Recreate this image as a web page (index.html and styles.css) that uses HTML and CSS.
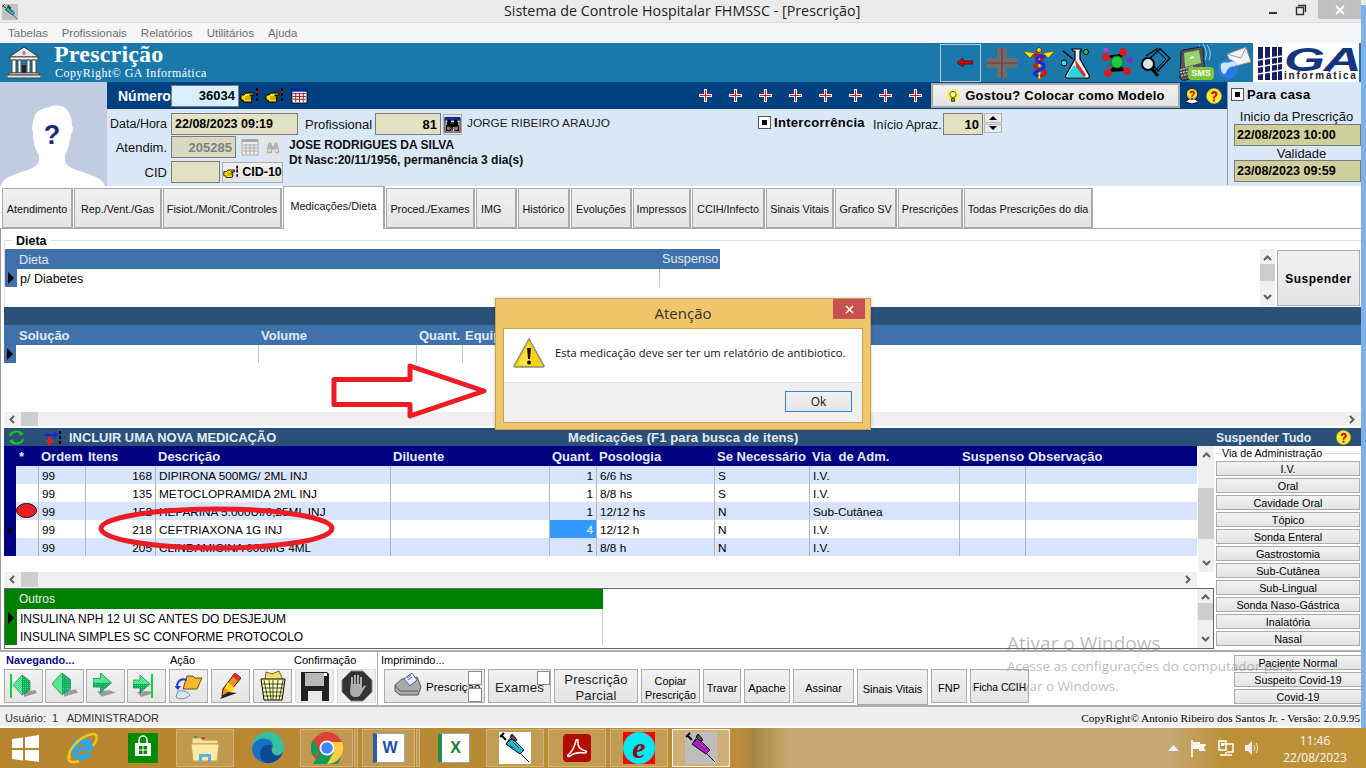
FILE: index.html
```html
<!DOCTYPE html>
<html lang="pt-BR">
<head>
<meta charset="utf-8">
<title>Sistema de Controle Hospitalar FHMSSC - [Prescrição]</title>
<link rel="stylesheet" href="styles.css">
</head>
<body>
<svg class="defs" width="0" height="0" aria-hidden="true">
  <defs>
    <pattern id="dith" width="2" height="2" patternUnits="userSpaceOnUse"><rect width="2" height="2" fill="#24dc70"/><rect width="1" height="1" fill="#8cf0b0"/><rect x="1" y="1" width="1" height="1" fill="#8cf0b0"/></pattern>
    <pattern id="dith2" width="2" height="2" patternUnits="userSpaceOnUse"><rect width="2" height="2" fill="#0fa858"/><rect width="1" height="1" fill="#3cdc90"/></pattern>
  </defs>
  <symbol id="plus" viewBox="0 0 13 13"><path d="M5 0h3v5h5v3H8v5H5V8H0V5h5z" fill="#fff"/><path d="M6 1h1v5h5v1H7v5H6V7H1V6h5z" fill="#d61a1a"/></symbol>
  <symbol id="hand" viewBox="0 0 18 18"><path d="M1 8h3l2-2h8v2h-4v1h2v2h-1v1h1v1l-1 2H4l-1-2H1z" fill="#ffe100" stroke="#000" stroke-width="1"/><path d="M5 10h6M5 12h6" stroke="#a08000"/><path d="M16 1h2v3h-2zM16 6h2v3h-2zM16 11h2v3h-2z" fill="#000"/><path d="M16 4h2v2h-2z" fill="#e00"/></symbol>
  <symbol id="cal" viewBox="0 0 18 18"><rect x="1" y="2" width="16" height="15" fill="#fff" stroke="#000"/><rect x="1" y="1" width="16" height="4" fill="#0a2aa0"/><path d="M2 7h14M2 10h14M2 13h14M5 6v10M9 6v10M13 6v10" stroke="#902020"/></symbol>
  <symbol id="calg" viewBox="0 0 18 18"><rect x="1" y="2" width="16" height="15" fill="#eee" stroke="#aaa"/><rect x="1" y="1" width="16" height="3" fill="#aaa"/><path d="M2 7h14M2 10h14M2 13h14M5 6v10M9 6v10M13 6v10" stroke="#aaa"/></symbol>
  <symbol id="binoc" viewBox="0 0 18 18"><path d="M4 4h3l1 4h2l1-4h3l2 8v4h-5v-4H8v4H2v-4z" fill="currentColor"/><circle cx="5" cy="13" r="2" fill="#fff" opacity=".5"/><circle cx="13" cy="13" r="2" fill="#fff" opacity=".5"/></symbol>
  <symbol id="bulb" viewBox="0 0 18 20"><path d="M9 0l2 3 3-2 0 4 4 1-2 3 2 3-4 1 0 3-3-1-2 3-2-3-3 1 0-3-4-1 2-3-2-3 4-1 0-4 3 2z" fill="#ffff30"/><circle cx="9" cy="8" r="4" fill="#fff6a0" stroke="#333"/><path d="M7 13h4v4H7z" fill="#888" stroke="#222"/></symbol>
  <symbol id="quest" viewBox="0 0 16 16"><circle cx="8" cy="8" r="7.500" fill="#ffe830"/><circle cx="8" cy="8" r="7.500" fill="none" stroke="#e0c000" stroke-dasharray="1 1"/><path d="M5 6c0-4 6.500-4 6.500 0 0 2.500-2.500 2.500-2.500 4.500H7c0-3 2.500-3 2.300-4.500 0-1.200-2-1.200-2.100.3z" fill="#d01010"/><rect x="7" y="11.500" width="2" height="2" fill="#d01010"/></symbol>
  <symbol id="qbook" viewBox="0 0 16 16"><path d="M1 14L8 9l7 5-7 2z" fill="#fff" stroke="#000"/><circle cx="8" cy="6" r="5.500" fill="#ffe830" stroke="#000" stroke-width=".6"/><path d="M5.500 5c0-3.500 5.500-3.500 5.500 0 0 2-2 2-2.200 4H7.200c0-2.500 2.200-2.500 2-4 0-1-1.800-1-1.900.2z" fill="#d01010"/><rect x="7" y="10" width="2" height="1.500" fill="#d01010"/></symbol>
  <symbol id="chev-up" viewBox="0 0 9 6"><path d="M1 5l3.500-3.500L8 5" fill="none" stroke="#606060" stroke-width="2"/></symbol>
  <symbol id="chev-down" viewBox="0 0 9 6"><path d="M1 1l3.500 3.500L8 1" fill="none" stroke="#606060" stroke-width="2"/></symbol>
  <symbol id="chev-left" viewBox="0 0 6 9"><path d="M5 1L1.500 4.500 5 8" fill="none" stroke="#606060" stroke-width="2"/></symbol>
  <symbol id="chev-right" viewBox="0 0 6 9"><path d="M1 1l3.500 3.500L1 8" fill="none" stroke="#606060" stroke-width="2"/></symbol>
  <symbol id="ind" viewBox="0 0 9 14"><path d="M1 0l7 7-7 7z" fill="#000"/></symbol>
  <symbol id="gem" viewBox="0 0 24 24"><path d="M11 17l11-2 2 3-13 4z" fill="#9a9a9a"/><path d="M0 10L9 0v20z" fill="url(#dith)"/><path d="M9 0l8 6v9l-8 5z" fill="url(#dith2)"/><path d="M0 10L9 0l8 6v9l-8 5z" fill="none" stroke="#0a7a40" stroke-width=".6"/></symbol>
  <symbol id="gemr" viewBox="0 0 24 24"><path d="M4 17l11-1 6 2-13 4z" fill="#9a9a9a"/><path d="M0 5h7V0l10 9-10 9v-5H0z" fill="url(#dith2)"/><path d="M7 0l10 9H0V5h7z" fill="url(#dith)"/><path d="M0 5h7V0l10 9-10 9v-5H0z" fill="none" stroke="#0a7a40" stroke-width=".6"/></symbol>
  <symbol id="syr" viewBox="0 0 32 32"><path d="M2 3l5 5M5 1L1 5" stroke="#000" stroke-width="2"/><path d="M7 12l5-5 3 1 10 10-4 4L11 15z" fill="var(--barrel,#27b5c9)" stroke="#000"/><path d="M12 5l-5 7M13 2l5 6-3 1-4-4z" fill="#555" stroke="#000"/><path d="M21 21l9 9" stroke="#000"/><path d="M11 13l3 3M14 10l3 3M17 13l3 3" stroke="var(--mark,#0a5060)"/></symbol>
</svg>

<div class="screen">
  <header class="titlebar">
    <span class="app-ico"><svg width="16" height="16"><use href="#syr"/></svg></span>
    <span class="title-text">Sistema de Controle Hospitalar FHMSSC - [Prescrição]</span>
    <div class="winbtns">
      <span class="wb"><svg width="10" height="10" viewBox="0 0 10 10"><rect x="1" y="7" width="8" height="2" fill="#333"/></svg></span>
      <span class="wb"><svg width="12" height="12" viewBox="0 0 12 12"><path d="M3 1.500h7.500V8M1.500 3.500h7v7h-7z" fill="none" stroke="#333" stroke-width="1.400"/></svg></span>
      <span class="wb close"><svg width="10" height="10" viewBox="0 0 10 10"><path d="M1 1l8 8M9 1L1 9" stroke="#fff" stroke-width="1.800"/></svg></span>
    </div>
  </header>

  <div class="client">
    <nav class="menubar">
      <span>Tabelas</span><span>Profissionais</span><span>Relatórios</span><span>Utilitários</span><span>Ajuda</span>
    </nav>

    <div class="brandbar">
      <svg class="building" width="34" height="33" viewBox="0 0 34 33"><path d="M17 1L2 11h30z" fill="#e8e8e8" stroke="#333"/><circle cx="17" cy="7" r="2" fill="#999"/><rect x="3" y="11" width="28" height="3" fill="#fff" stroke="#444"/><path d="M5 14h4v13H5zM11 14h3v13h-3zM20 14h3v13h-3zM25 14h4v13h-4z" fill="#fff" stroke="#444"/><path d="M15 19h4v8h-4z" fill="#222"/><rect x="2" y="27" width="30" height="2" fill="#fff" stroke="#444"/><rect x="0" y="29" width="34" height="3" fill="#e0e0e0" stroke="#444"/></svg>
      <div class="brandtext">
        <div class="brand-title">Prescrição</div>
        <div class="brand-copy">CopyRight© GA Informática</div>
      </div>
      <div class="sel-btn"><svg width="16" height="9" viewBox="0 0 16 9"><path d="M0 4.500L6 0v3h10v3H6v3z" fill="#e00000" stroke="#300" stroke-width=".7"/></svg></div>
      <svg class="tool-ico ti-cross" width="30" height="32" viewBox="0 0 30 32"><path d="M10 1h10v10h10v10H20v10H10V21H0V11h10z" fill="#6d6d6d"/><path d="M15 1v30M0 16h30" stroke="#8a2828"/></svg>
      <svg class="tool-ico" width="32" height="34" viewBox="0 0 32 34"><path d="M0 5l12 2-5 5zM32 5L20 7l5 5z" fill="#ffe000" stroke="#555" stroke-width=".8"/><rect x="15" y="1" width="3" height="32" fill="#ffe000" stroke="#665"/><circle cx="16" cy="4" r="2.500" fill="#ffe000" stroke="#333"/><path d="M10 10c8-3 13 1 7 5s-8 6 0 8 6 6 0 7" fill="none" stroke="#d81010" stroke-width="3"/><path d="M22 11c-7-2-12 3-6 5s8 5 1 8-7 4-2 6" fill="none" stroke="#1428d8" stroke-width="3"/></svg>
      <svg class="tool-ico" width="32" height="34" viewBox="0 0 32 34"><path d="M11 3h9v2h-1v8l9 16c1 2 0 3-2 3H7c-2 0-3-1-2-3l9-16V5h-2z" fill="#f2f2f2" stroke="#000" stroke-width="1.200"/><path d="M7 28l6-9 11 12H8c-1 0-2-1-1-3z" fill="#20d8e0"/><path d="M14 13l11 16-2 2-8-10z" fill="#d43030"/><circle cx="3" cy="17" r="3" fill="#30e0d0" stroke="#000"/><circle cx="25" cy="6" r="2.500" fill="#20d070" stroke="#000"/><path d="M2 5l10 8" stroke="#000" stroke-width="1.500"/></svg>
      <svg class="tool-ico ti-mol" width="32" height="32" viewBox="0 0 32 32"><path d="M5 9l11 6 10-9M6 25l10-10 10 9M16 15L5 20" stroke="#555" stroke-width="1.500"/><circle cx="16" cy="15" r="6" fill="#24c83c" stroke="#117a20"/><circle cx="5" cy="10" r="3.800" fill="#e01818"/><circle cx="22" cy="5" r="3.800" fill="#e01818"/><circle cx="7" cy="26" r="3.800" fill="#e01818"/><circle cx="26" cy="24" r="3.800" fill="#e01818"/><circle cx="5" cy="3" r="2.500" fill="#c040c0"/><circle cx="29" cy="13" r="2.800" fill="#9020c0"/></svg>
      <svg class="tool-ico" width="32" height="32" viewBox="0 0 32 32"><path d="M9 13L21 2l10 9-12 13zM7 9l12-8" fill="none" stroke="#000" stroke-width="1.300"/><path d="M17 3l10 9-11 12" fill="none" stroke="#000"/><circle cx="9" cy="17" r="6" fill="#d7e7ea" stroke="#000" stroke-width="2"/><path d="M13 22l6 7" stroke="#000" stroke-width="3"/></svg>
      <div class="phone-ico">
        <svg width="38" height="37" viewBox="0 0 38 37"><path d="M23 1c3 5 3 9 1 13M27 0c4 6 4 11 2 16M31 1c4 6 4 10 2 15" stroke="#a8d8e8" fill="none"/><path d="M5 9c0-2 1-3 3-3l16-3c2 0 3 1 3 3l2 24-19 6c-3 1-6 0-6-3z" fill="#555" stroke="#1c1c1c"/><path d="M8 9l15-3 2 13-16 4z" fill="#94d070"/><path d="M13 15l3-3 3 2z" fill="#fff"/><path d="M4 26l13-4M4 29l12-3M5 32l10-3" stroke="#ddd" stroke-dasharray="2 1"/></svg>
        <span class="sms">SMS</span>
      </div>
      <svg class="tool-ico ti-globe" width="33" height="34" viewBox="0 0 33 34"><path d="M9 8L28 1l5 15-19 5z" fill="#f4f4f4" stroke="#888"/><path d="M9 8l14 4 5-11" fill="none" stroke="#999"/><circle cx="10" cy="23" r="10" fill="#2a78e4"/><path d="M3 18c4-3 6 0 9-2s6 0 7 3c-3 3-5 0-8 3s-3 6-5 6-4-6-3-10z" fill="#c8e6ff"/></svg>
      <div class="ga-logo">
        <svg width="25" height="33" viewBox="0 0 25 33"><path d="M0 0h5v33H0zM7 0h5v33H7zM14 0h5v33h-5zM20 0h4v33h-4z" fill="#15205e"/><path d="M0 13l25-4M0 20l25-4M0 27l25-4" stroke="#fff" stroke-width="1.500"/></svg>
        <div class="ga-text"><span class="ga-big">GA</span><span class="ga-small">informática</span></div>
      </div>
    </div>

    <div class="info">
      <div class="photo">
        <svg width="107" height="104" viewBox="0 0 107 104"><path d="M1 104C3 94 18 92 30 87 38 84 40 80 39 73 35 68 33 60 33 50 31 46 33 40 34 36 35 28 45 26 50 25 53 23 62 23 65 26 70 30 72 36 72 44 74 46 73 50 71 52 70 60 68 68 65 73 64 80 66 84 74 87 86 92 102 94 105 104Z" fill="#fff"/><text x="52" y="62" text-anchor="middle" class="photo-q">?</text></svg>
      </div>
      <div class="info-main">
        <div class="band">
          <span class="num-label">Número</span>
          <span class="fld fld-num">36034</span>
          <svg class="ico-hand1" width="18" height="18"><use href="#hand"/></svg>
          <svg class="ico-hand2" width="18" height="18"><use href="#hand"/></svg>
          <svg class="ico-cal" width="17" height="17"><use href="#cal"/></svg>
          <div class="pluses">
            <svg width="13" height="13"><use href="#plus"/></svg><svg width="13" height="13"><use href="#plus"/></svg><svg width="13" height="13"><use href="#plus"/></svg><svg width="13" height="13"><use href="#plus"/></svg><svg width="13" height="13"><use href="#plus"/></svg><svg width="13" height="13"><use href="#plus"/></svg><svg width="13" height="13"><use href="#plus"/></svg><svg width="13" height="13"><use href="#plus"/></svg>
          </div>
          <div class="btn modelo"><svg width="14" height="16"><use href="#bulb"/></svg><span>Gostou? Colocar como Modelo</span></div>
          <svg class="help1" width="16" height="16"><use href="#qbook"/></svg>
          <svg class="help2" width="16" height="16"><use href="#quest"/></svg>
        </div>
        <div class="form">
          <div class="row-top">
            <span class="lbl lbl-dh">Data/Hora</span>
            <span class="fld fld-date">22/08/2023 09:19</span>
            <span class="lbl lbl-prof">Profissional</span>
            <span class="fld fld-prof">81</span>
            <span class="btn-ico"><svg width="17" height="17" class="dark-ico"><use href="#cal"/><use href="#binoc"/></svg></span>
            <span class="prof-name">JORGE RIBEIRO ARAUJO</span>
            <span class="chk chk-up"></span>
            <span class="chk-lbl chk-lbl-i">Intercorrência</span>
            <span class="lbl lbl-apraz">Início Apraz.</span>
            <span class="fld fld-apraz">10</span>
            <span class="spinner">
              <span class="spin"><i class="tri-up"></i></span>
              <span class="spin"><i class="tri-down"></i></span>
            </span>
          </div>
          <div class="row-bottom">
            <div class="col-cid">
              <div class="row-a">
                <span class="lbl">Atendim.</span>
                <span class="fld fld-at">205285</span>
                <span class="ic-g"><svg width="18" height="18"><use href="#calg"/></svg></span>
                <span class="ic-g ic-g2"><svg width="16" height="16" class="gray-ico"><use href="#binoc"/></svg></span>
              </div>
              <div class="row-c">
                <span class="lbl">CID</span>
                <span class="fld fld-cid"></span>
                <span class="btn cid-btn"><svg width="15" height="15"><use href="#hand"/></svg>CID-10</span>
              </div>
            </div>
            <div class="patient">
              <div>JOSE RODRIGUES DA SILVA</div>
              <div>Dt Nasc:20/11/1956, permanência 3 dia(s)</div>
            </div>
          </div>
        </div>
      </div>
      <aside class="side">
        <div class="side-chk"><span class="chk"></span><span class="chk-lbl">Para casa</span></div>
        <div class="side-lbl">Inicio da Prescrição</div>
        <span class="fld fld-side">22/08/2023 10:00</span>
        <div class="side-lbl side-val">Validade</div>
        <span class="fld fld-side">23/08/2023 09:59</span>
      </aside>
    </div>

    <div class="tabs">
      <span class="tab">Atendimento</span>
      <span class="tab">Rep./Vent./Gas</span>
      <span class="tab">Fisiot./Monit./Controles</span>
      <span class="tab active">Medicações/Dieta</span>
      <span class="tab">Proced./Exames</span>
      <span class="tab tab-left">IMG</span>
      <span class="tab">Histórico</span>
      <span class="tab">Evoluções</span>
      <span class="tab">Impressos</span>
      <span class="tab">CCIH/Infecto</span>
      <span class="tab">Sinais Vitais</span>
      <span class="tab">Grafico SV</span>
      <span class="tab">Prescrições</span>
      <span class="tab">Todas Prescrições do dia</span>
    </div>

    <main class="main">
      <section class="dieta">
        <div class="group">
          <span class="legend">Dieta</span>
          <div class="dieta-grid">
            <div class="dg-head"><span class="dg-ind"></span><span class="dg-c1">Dieta</span><span class="dg-c2">Suspenso</span></div>
            <div class="dg-row"><span class="dg-ind"><svg width="8" height="12"><use href="#ind"/></svg></span><span class="dg-c1">p/ Diabetes</span><span class="dg-c2"></span></div>
          </div>
          <div class="vscroll vs-dieta">
            <svg width="9" height="6"><use href="#chev-up"/></svg>
            <span class="thumb th-dieta"></span>
            <svg class="end" width="9" height="6"><use href="#chev-down"/></svg>
          </div>
          <div class="btn suspender">Suspender</div>
        </div>
      </section>

      <div class="bar bar-sol"></div>
      <div class="sol-head"><span>Solução</span><span>Volume</span><span>Quant.</span><span>Equip</span><span class="sol-end">mo</span></div>
      <div class="sol-row"><span class="sol-ind"><svg width="8" height="12"><use href="#ind"/></svg></span><span></span><span></span><span></span><span></span></div>
      <div class="sol-space"></div>
      <div class="hscroll"><svg width="6" height="9"><use href="#chev-left"/></svg><span class="thumb th-h"></span><svg class="end" width="6" height="9"><use href="#chev-right"/></svg></div>

      <div class="bar bar-med">
        <svg class="ref-ico" width="17" height="15" viewBox="0 0 17 15"><path d="M2 6c1-5 9-6 12-2M15 9c-1 5-9 6-12 2" fill="none" stroke="#19c41e" stroke-width="2.200"/><path d="M11 1l5 3-4 2zM6 14l-5-3 4-2z" fill="#19c41e"/></svg>
        <svg class="add-ico" width="17" height="15" viewBox="0 0 17 15"><path d="M1 4h9V1l4 4-4 3V6H1z" fill="#1420e8"/><path d="M4 7h3v3h3v2H7v3H4v-3H1v-2h3z" fill="#e02020"/><path d="M15 1h2v3h-2zM15 6h2v3h-2zM15 11h2v3h-2z" fill="#000"/></svg>
        <span class="bar-l">INCLUIR UMA NOVA MEDICAÇÃO</span>
        <span class="bar-c">Medicações (F1 para busca de itens)</span>
        <span class="bar-r">Suspender Tudo</span>
        <svg class="bar-q" width="15" height="15"><use href="#quest"/></svg>
      </div>

      <div class="lower">
        <div class="lower-left">
          <div class="med-wrap">
            <div class="med-grid">
              <div class="mrow mhead"><span></span><span class="star">*</span><span>Ordem</span><span>Itens</span><span>Descrição</span><span>Diluente</span><span>Quant.</span><span>Posologia</span><span>Se Necessário</span><span>Via  de Adm.</span><span>Suspenso</span><span>Observação</span></div>
              <div class="mrow odd"><span class="mi"></span><span class="mk"></span><span>99</span><span class="r">168</span><span>DIPIRONA 500MG/ 2ML INJ</span><span></span><span class="r">1</span><span>6/6 hs</span><span>S</span><span>I.V.</span><span></span><span></span></div>
              <div class="mrow"><span class="mi"></span><span class="mk"></span><span>99</span><span class="r">135</span><span>METOCLOPRAMIDA 2ML INJ</span><span></span><span class="r">1</span><span>8/8 hs</span><span>S</span><span>I.V.</span><span></span><span></span></div>
              <div class="mrow odd"><span class="mi"></span><span class="mk"></span><span>99</span><span class="r">152</span><span>HEPARINA 5.000UI/0,25ML INJ</span><span></span><span class="r">1</span><span>12/12 hs</span><span>N</span><span>Sub-Cutânea</span><span></span><span></span></div>
              <div class="mrow"><span class="mi"><svg width="6" height="12"><use href="#ind"/></svg></span><span class="mk"></span><span>99</span><span class="r">218</span><span>CEFTRIAXONA 1G INJ</span><span></span><span class="r selcell">4</span><span>12/12 h</span><span>N</span><span>I.V.</span><span></span><span></span></div>
              <div class="mrow odd"><span class="mi"></span><span class="mk"></span><span>99</span><span class="r">205</span><span>CLINDAMICINA 600MG 4ML</span><span></span><span class="r">1</span><span>8/8 h</span><span>N</span><span>I.V.</span><span></span><span></span></div>
            </div>
            <div class="vscroll vs-med">
              <svg width="9" height="6"><use href="#chev-up"/></svg>
              <span class="thumb th-med"></span>
              <svg class="end" width="9" height="6"><use href="#chev-down"/></svg>
            </div>
          </div>
          <div class="hscroll hs-med"><svg width="6" height="9"><use href="#chev-left"/></svg><span class="thumb th-h"></span><svg class="end" width="6" height="9"><use href="#chev-right"/></svg></div>
          <div class="outros">
            <div class="ou-grid">
              <div class="ou-head">Outros</div>
              <div class="ou-row"><span class="ou-ind"><svg width="8" height="12"><use href="#ind"/></svg></span><span>INSULINA NPH 12 UI SC ANTES DO DESJEJUM</span></div>
              <div class="ou-row"><span class="ou-ind"></span><span>INSULINA SIMPLES SC CONFORME PROTOCOLO</span></div>
            </div>
            <div class="vscroll vs-ou">
              <svg width="9" height="6"><use href="#chev-up"/></svg>
              <span class="thumb th-ou"></span>
              <svg class="end" width="9" height="6"><use href="#chev-down"/></svg>
            </div>
          </div>
        </div>
        <div class="via">
          <span class="via-legend">Via de Administração</span>
          <div class="via-list">
            <span class="btn via-btn">I.V.</span><span class="btn via-btn">Oral</span><span class="btn via-btn">Cavidade Oral</span><span class="btn via-btn">Tópico</span><span class="btn via-btn">Sonda Enteral</span><span class="btn via-btn">Gastrostomia</span><span class="btn via-btn">Sub-Cutânea</span><span class="btn via-btn">Sub-Lingual</span><span class="btn via-btn">Sonda Naso-Gástrica</span><span class="btn via-btn">Inalatória</span><span class="btn via-btn">Nasal</span>
          </div>
        </div>
      </div>
    </main>

    <footer class="toolbar">
      <div class="tb-group tb-nav">
        <span class="tb-label tb-blue">Navegando...</span>
        <div class="tb-btns">
          <span class="btn tb-ic"><svg width="28" height="26" viewBox="0 0 28 26"><rect x="0" y="1" width="2" height="24" fill="#10d040"/><use href="#gem" x="3" y="2" width="24" height="24"/></svg></span>
          <span class="btn tb-ic"><svg width="26" height="26"><use href="#gem"/></svg></span>
          <span class="btn tb-ic"><svg width="26" height="26"><use href="#gemr"/></svg></span>
          <span class="btn tb-ic"><svg width="28" height="26" viewBox="0 0 28 26"><use href="#gemr" x="0" y="2" width="24" height="24"/><rect x="18" y="1" width="2" height="24" fill="#10d040"/></svg></span>
        </div>
      </div>
      <div class="tb-group tb-acao">
        <span class="tb-label">Ação</span>
        <div class="tb-btns">
          <span class="btn tb-ic"><svg width="28" height="30" viewBox="0 0 28 30"><path d="M12 5h6l2 2h7l-5 11H8z" fill="#f4b830" stroke="#7a4c00"/><path d="M12 10c-5-2-8 0-9 5l3 0-3 4-4-4 2 0c1-7 6-9 11-7z" fill="#2040e0"/><path d="M3 20c5-1 10 1 12 4-3 4-11 5-14 2z" fill="#cfeaff" stroke="#888"/></svg></span>
          <span class="btn tb-ic"><svg width="24" height="30" viewBox="0 0 24 30"><path d="M16 2l6 5-13 16-6 2 1-7z" fill="#f29020" stroke="#301000"/><path d="M16 2l6 5-3 3-6-5z" fill="#d03040"/><path d="M9 11l7 6-4 5-6-5z" fill="#ffd820"/><path d="M3 25l-2 3 3-1 14-5-9-1z" fill="#222"/></svg></span>
          <span class="btn tb-ic"><svg width="28" height="32" viewBox="0 0 28 32"><path d="M7 2l6 2 7-3 4 9H6z" fill="#f6e060" stroke="#665"/><path d="M2 9h24l-3 21H5z" fill="#ffffb0" stroke="#000"/><path d="M5 10l4 20M10 10l2 20M14 10v20M19 10l-2 20M24 10l-4 20M3 14h22M4 18h20M4 22h19M5 26h18" stroke="#222" stroke-width=".8"/></svg></span>
        </div>
      </div>
      <div class="tb-group tb-conf">
        <span class="tb-label">Confirmação</span>
        <div class="tb-btns">
          <span class="btn tb-ic tb-off"><svg width="28" height="30" viewBox="0 0 28 30"><path d="M0 1h26l2 2v27H0z" fill="#222"/><rect x="4" y="2" width="19" height="13" fill="#b8b8b8"/><rect x="23" y="2" width="3" height="3" fill="#fff"/><rect x="7" y="20" width="14" height="10" fill="#e8e8e8"/></svg></span>
          <span class="btn tb-ic tb-off"><svg width="32" height="32" viewBox="0 0 32 32"><path d="M10 1h12l9 9v12l-9 9H10l-9-9V10z" fill="#333" stroke="#888"/><path d="M10 12V7h2v7h1V5h2v9h1V5h2v9h1V7h2v11l3-3 1 1-5 8c-1 2-2 3-5 3-4 0-6-2-6-6z" fill="#b0aca8"/></svg></span>
        </div>
      </div>
      <div class="tb-print">
        <span class="tb-label">Imprimindo...</span>
        <div class="tb-btns print-btns">
          <span class="btn pb-presc">
            <svg width="28" height="26" viewBox="0 0 28 26"><path d="M1 12l7-6 15-2 4 10-3 8H6l-5-4z" fill="#aaa" stroke="#555"/><path d="M10 6l8-6 5 7-7 6z" fill="#e8e8ff" stroke="#567"/><path d="M13 5l4-3M14 7l4-3" stroke="#4060d0"/><path d="M1 12l5 6h18" fill="none" stroke="#555"/></svg>
            <span class="pb-t">Prescrição</span>
            <i class="cb cb1"></i><i class="cb cb2"></i>
          </span>
          <span class="btn pb pb-ex pb-lg">Exames<i class="cb cb3"></i></span>
          <span class="btn pb pb-par pb-lg">Prescrição<br>Parcial</span>
          <span class="btn pb pb-cop">Copiar<br>Prescrição</span>
          <span class="btn pb pb-tra">Travar</span>
          <span class="btn pb pb-apa">Apache</span>
          <span class="btn pb pb-ass">Assinar</span>
          <span class="btn pb pb-sin">Sinais Vitais</span>
          <span class="btn pb pb-fnp">FNP</span>
          <span class="btn pb pb-fic">Ficha CCIH</span>
        </div>
      </div>
      <div class="pat-btns">
        <span class="btn pat">Paciente Normal</span>
        <span class="btn pat">Suspeito Covid-19</span>
        <span class="btn pat">Covid-19</span>
      </div>
    </footer>

    <div class="statusbar">
      <span>Usuário:&nbsp; 1 &nbsp; ADMINISTRADOR</span>
      <span class="st-copy">CopyRight© Antonio Ribeiro dos Santos Jr. - Versão: 2.0.9.95</span>
    </div>
  </div>

  <div class="taskbar">
    <div class="start"><svg width="27" height="27" viewBox="0 0 27 27"><path d="M0 4l11-1.500V13H0zM13 2.200L27 0v13H13zM0 15h11v10.500L0 24zM13 15h14v12l-14-2z" fill="#fff"/></svg></div>
    <div class="slots">
      <div class="slot"><svg width="32" height="32" viewBox="0 0 32 32"><path d="M16 6a11 11 0 1 0 10 15h-7c-2 3-8 2-9-2h17c1-9-4-13-11-13zm-6 9c1-4 8-4 10 0z" fill="#29a9ea"/><path d="M4 27C0 20 12 5 26 2c6-1 6 6 1 12M3 23c-2 6 2 9 10 6" fill="none" stroke="#f5c518" stroke-width="2.500"/></svg></div>
      <div class="slot"><svg width="30" height="30" viewBox="0 0 30 30"><rect width="30" height="30" fill="#008a00"/><path d="M7 10h16v13H7z" fill="#fff"/><path d="M11 10V7a4 4 0 0 1 8 0v3" fill="none" stroke="#fff" stroke-width="1.500"/><path d="M11 13h3.500v3.500H11zM15.500 13H19v3.500h-3.500zM11 17.500h3.500V21H11zM15.500 17.500H19V21h-3.500z" fill="#008a00"/></svg></div>
      <div class="slot"><div class="frame"><svg width="30" height="30" viewBox="0 0 30 30"><path d="M2 5h8l2 2h16v4H2z" fill="#f4e39a" stroke="#b89a4a"/><rect x="4" y="3" width="3" height="2" fill="#40a040"/><rect x="12" y="4" width="3" height="2" fill="#d04040"/><path d="M1 11h28l-2 17H3z" fill="#fbe9a8" stroke="#c4a050"/><path d="M9 21h12v8h-3v-5h-6v5H9z" fill="#5ab2e8"/></svg></div></div>
      <div class="slot"><svg width="32" height="32" viewBox="0 0 32 32"><path d="M16 0a16 16 0 0 1 16 17c0 5-5 7-9 6-4-1-5-5-2-7-3-4-9-4-12 0-4-2-7-5-9-4A16 16 0 0 1 16 0z" fill="#35c1a0"/><path d="M0 16C1 9 9 5 15 7c4 1 6 4 6 7-5-3-12 0-13 6-1 5 2 9 6 11C6 30 0 24 0 16z" fill="#1a70c8"/><path d="M8 20c1-6 8-9 13-6-2 2-2 7 2 9 3 1 6 0 8-3-2 7-9 12-17 11-4-2-7-6-6-11z" fill="#0c4a94"/></svg></div>
      <div class="slot"><div class="frame frame-s"><svg width="32" height="32" viewBox="0 0 32 32"><circle cx="16" cy="16" r="16" fill="#db4437"/><path d="M16 16L2.100 24A16 16 0 0 1 2.100 8L9 20z" fill="#0f9d58"/><path d="M16 16l-7 4-6.900 12A16 16 0 0 0 30 24l-7-4z" fill="#0f9d58"/><path d="M16 32A16 16 0 0 0 31 10H16l7 10z" fill="#ffcd40"/><circle cx="16" cy="16" r="7.500" fill="#fff"/><circle cx="16" cy="16" r="5.800" fill="#4285f4"/></svg></div><i class="stub"></i></div>
      <div class="slot"><div class="frame frame-s"><div class="doc-ico word"><span>W</span></div></div><i class="stub"></i></div>
      <div class="slot"><div class="doc-ico excel"><span>X</span></div></div>
      <div class="slot"><div class="frame"><span class="syr-box"><svg width="32" height="32"><use href="#syr"/></svg></span></div></div>
      <div class="slot"><div class="frame"><svg width="28" height="28" viewBox="0 0 28 28"><rect width="28" height="28" rx="4" fill="#b30b00"/><path d="M5 21c3-2 6-7 8-14 0-2 2-2 2 0-1 6 3 9 8 10 1 1 0 2-1 2-6-1-11 0-15 3-2 1-3 0-2-1z" fill="none" stroke="#fff" stroke-width="1.500"/></svg></div></div>
      <div class="slot"><div class="frame"><span class="e-box"><span class="e-circle"><span>e</span></span></span></div></div>
      <div class="slot"><div class="frame frame-act"><span class="syr-box syr-gray"><svg width="32" height="32"><use href="#syr"/></svg></span></div></div>
    </div>
    <div class="tray">
      <svg width="13" height="6" viewBox="0 0 13 6"><path d="M6.500 0L12 6H1z" fill="#f2f2f2"/></svg>
      <svg class="tr-ico" width="16" height="17" viewBox="0 0 16 17"><path d="M1 0v17" stroke="#fff" stroke-width="1.600"/><path d="M2 2h7v2h6l-2 4 2 3H8V9H2z" fill="#fff" opacity=".9"/></svg>
      <svg class="tr-ico" width="16" height="17" viewBox="0 0 16 17"><path d="M1 1h7v9H1z" fill="none" stroke="#fff" stroke-width="1.500"/><path d="M3 3h3v3H3z" fill="#fff"/><path d="M6 4h9v8H9" fill="none" stroke="#fff" stroke-width="1.500"/><path d="M2 15h12M8 12v3" stroke="#fff" stroke-width="1.500"/></svg>
      <svg class="tr-ico" width="14" height="14" viewBox="0 0 14 14"><path d="M0 4h3l4-4v14l-4-4H0z" fill="#eee"/><path d="M9 4c1 2 1 4 0 6M11 2c2 3 2 7 0 10" fill="none" stroke="#eee"/></svg>
      <div class="clock"><div>11:46</div><div>22/08/2023</div></div>
    </div>
  </div>

  <svg class="annot" width="1366" height="768" viewBox="0 0 1366 768">
    <path d="M334 379.500H410V366L484 391 410 416V404.500H334z" fill="none" stroke="#ed1c24" stroke-width="5" stroke-linejoin="round"/>
    <ellipse cx="216.500" cy="528.500" rx="115.500" ry="19.500" fill="none" stroke="#ed1c24" stroke-width="5"/>
    <ellipse cx="26.500" cy="510.500" rx="10" ry="7" fill="#ed1c24" stroke="#111"/>
  </svg>

  <div class="dialog">
    <div class="dlg-title">Atenção</div>
    <span class="dlg-close"><svg width="9" height="9" viewBox="0 0 9 9"><path d="M1 1l7 7M8 1L1 8" stroke="#fff" stroke-width="1.600"/></svg></span>
    <div class="dlg-body">
      <div class="dlg-msg">
        <svg width="32" height="30" viewBox="0 0 32 30"><path d="M16 1L1 28c0 1 0 1 1 1h28c1 0 1 0 1-1z" fill="#ffd400" stroke="#8a8a8a" stroke-width="1.500"/><path d="M5 27L16 6v21z" fill="#ffe96a" opacity=".7"/><path d="M14 10h4l-1 11h-2z" fill="#111"/><circle cx="16" cy="24.500" r="2" fill="#111"/></svg>
        <span>Esta medicação deve ser ter um relatório de antibiotico.</span>
      </div>
      <div class="dlg-foot"><span class="dlg-ok">Ok</span></div>
    </div>
  </div>

  <div class="watermark">
    <div class="wm1">Ativar o Windows</div>
    <div class="wm2">Acesse as configurações do computador para<br>ativar o Windows.</div>
  </div>
</div>
</body>
</html>
```

FILE: styles.css
```css
* { box-sizing: border-box; }
html, body { margin: 0; padding: 0; }
body { font-family: "Liberation Sans", Arial, sans-serif; font-size: 11px; color: #000; background: #fff; }
.defs { position: absolute; }
svg { display: block; flex: none; }
.screen { position: relative; width: 1366px; height: 768px; overflow: hidden; display: flex; flex-direction: column; }

/* title bar */
.titlebar { height: 23px; flex: none; display: flex; align-items: center; background: #ebebeb; border-bottom: 1px solid #d9d9d9; position: relative; }
.titlebar::after { content: ""; position: absolute; right: 0; top: 5px; width: 5px; height: 18px; background: #7fb0e8; }
.app-ico { width: 16px; height: 16px; margin: 1px 0 0 2px; background: #c0c0c0; display: block; }
.title-text { position: absolute; left: 504px; top: 1px; font-family: "Open Sans", sans-serif; font-size: 14.300px; color: #222; white-space: nowrap; }
.winbtns { position: absolute; right: 5px; top: 0; display: flex; align-items: flex-start; }
.wb { width: 28px; height: 19px; display: flex; align-items: center; justify-content: center; }
.wb.close { width: 43px; background: #c0c0c0; margin-left: 3px; }

.client { height: 705px; flex: none; display: flex; flex-direction: column; border-right: 5px solid #7fb0e8; background: #fff; }

/* menu */
.menubar { height: 20px; flex: none; display: flex; align-items: center; padding-left: 8px; gap: 14px; background: #f5f6f7; font-size: 11.500px; color: #6d6d6d; }

/* brand */
.brandbar { height: 39px; flex: none; display: flex; align-items: center; background: #1a78ab; color: #fff; }
.building { margin-left: 7px; }
.brandtext { margin-left: 13px; margin-top: -5px; width: 886px; font-family: "Liberation Serif", serif; }
.brand-title { font-size: 24px; font-weight: 700; letter-spacing: .2px; line-height: 24px; }
.brand-copy { font-size: 12px; line-height: 12px; margin-top: 1px; letter-spacing: .45px; margin-left: 1px; }
.sel-btn { width: 41px; height: 38px; border: 1px solid #b9c9d6; display: flex; align-items: center; justify-content: flex-end; padding-right: 7px; }
.tool-ico { margin-left: 6px; }
.ti-mol { margin-left: 8px; }
.ti-globe { margin-left: 4px; }
.phone-ico { position: relative; width: 38px; height: 37px; margin-left: 5px; }
.sms { position: absolute; right: 0; bottom: 1px; width: 26px; height: 13px; border-radius: 4px; background: #7ec63a; color: #fff; font-size: 9px; font-weight: 700; line-height: 13px; text-align: center; }
.ga-logo { margin-left: 2px; width: 106px; height: 39px; background: #fff; display: flex; padding: 4px 0 0 5px; overflow: hidden; color: #15337e; }
.ga-text { margin-left: 1px; position: relative; width: 75px; }
.ga-big { display: block; font-size: 34px; font-weight: 700; font-style: italic; line-height: 24px; height: 24px; letter-spacing: -1px; white-space: nowrap; transform: scaleX(1.55); transform-origin: left center; }
.ga-small { display: block; font-size: 10px; font-weight: 700; letter-spacing: 1.800px; line-height: 10px; color: #222; white-space: nowrap; }

/* info */
.info { height: 104px; flex: none; display: flex; background: #dae7f7; }
.photo { width: 107px; background: #c1cce0; overflow: hidden; }
.photo-q { font: 700 27px "Liberation Sans", sans-serif; fill: #1c2a70; }
.info-main { flex: 1; display: flex; flex-direction: column; min-width: 0; }
.band { height: 27px; flex: none; display: flex; align-items: center; padding-right: 5px; background: #003f80; color: #fff; }
.num-label { width: 53px; margin-left: 11px; font-size: 14px; font-weight: 700; }
.fld { display: flex; align-items: center; justify-content: flex-end; height: 22px; padding: 0 3px; border: 1px solid #7b7b7b; background: #e2e2c3; color: #000; font-size: 13px; font-weight: 700; white-space: nowrap; flex: none; }
.fld-num { width: 68px; background: #d8efff; }
.ico-hand1 { margin-left: 1px; }
.ico-hand2 { margin-left: 7px; }
.ico-cal { margin-left: 8px; }
.pluses { margin-left: auto; margin-right: 9px; display: flex; gap: 17px; }
.btn { display: flex; align-items: center; justify-content: center; border: 1px solid #ababab; background: linear-gradient(#f1f1f1, #e4e4e4); color: #000; white-space: nowrap; flex: none; }
.modelo { width: 249px; height: 25px; gap: 5px; font-size: 13px; font-weight: 700; letter-spacing: .25px; border-width: 2px; }
.help1 { margin-left: 4px; }
.help2 { margin-left: 6px; }
.form { flex: 1; display: flex; flex-direction: column; padding-top: 4px; }
.row-top { display: flex; align-items: center; height: 22px; }
.lbl { width: 60px; margin-right: 4px; text-align: right; font-size: 13px; color: #111; flex: none; white-space: nowrap; }
.lbl-dh { font-size: 12.500px; }
.fld-date { width: 127px; justify-content: flex-start; font-size: 12.500px; }
.lbl-prof { width: 66px; margin-left: 7px; }
.fld-prof { width: 66px; }
.btn-ico { width: 19px; height: 21px; margin-left: 2px; border: 1px solid #ababab; background: #e8e8e8; display: flex; align-items: center; justify-content: center; flex: none; }
.dark-ico { color: #000; }
.prof-name { width: 291px; flex: none; margin-left: 5px; margin-top: -2px; font-size: 11.800px; color: #222; white-space: nowrap; }
.chk { display: block; width: 13px; height: 13px; border: 1px solid #555; background: #fff; position: relative; flex: none; }
.chk::after { content: ""; position: absolute; left: 3px; top: 3px; width: 5px; height: 5px; background: #000; }
.chk-up { margin-top: -3px; }
.chk-lbl { font-size: 13px; font-weight: 700; letter-spacing: .3px; white-space: nowrap; }
.chk-lbl-i { width: 99px; margin-left: 3px; margin-top: -4px; flex: none; }
.lbl-apraz { width: 69px; margin-right: 1px; font-size: 12.500px; text-align: left; margin-top: 1px; }
.fld-apraz { width: 40px; }
.spinner { margin-left: 1px; width: 18px; display: flex; flex-direction: column; gap: 1px; margin-top: -2px; }
.spin { height: 9.500px; border: 1px solid #b5b5b5; background: #e9e9e9; display: flex; align-items: center; justify-content: center; }
.tri-up { width: 0; height: 0; border: 4px solid transparent; border-top: 0; border-bottom: 4px solid #000; }
.tri-down { width: 0; height: 0; border: 4px solid transparent; border-bottom: 0; border-top: 4px solid #000; }
.row-bottom { display: flex; margin-top: 1px; }
.col-cid { width: 178px; flex: none; }
.row-a { display: flex; align-items: center; height: 22px; }
.row-c { display: flex; align-items: center; height: 22px; margin-top: 3px; }
.fld-at { width: 65px; color: #808080; background: #d9d9c0; }
.ic-g { width: 19px; height: 20px; margin-left: 4px; background: #e6e6e6; display: flex; align-items: center; justify-content: center; flex: none; }
.ic-g2 { width: 21px; margin-left: 3px; }
.gray-ico { color: #b0b0b0; }
.fld-cid { width: 49px; }
.cid-btn { width: 61px; height: 21px; margin-left: 2px; gap: 4px; font-size: 12.500px; font-weight: 700; }
.patient { margin-left: 4px; padding-top: 2px; font-size: 12px; font-weight: 700; line-height: 15px; color: #111; }
.side { width: 134px; flex: none; border-left: 1px solid #8d99ab; padding: 5px 0 0 6px; height: 103px; }
.side-chk { display: flex; align-items: center; gap: 3px; margin-left: -3px; }
.side-lbl { margin-top: 7px; margin-left: -6px; padding-left: 4px; height: 15px; text-align: center; font-size: 13px; line-height: 15px; color: #111; }
.side-val { margin-top: 0; height: 14px; padding-left: 14px; }
.fld-side { width: 127px; justify-content: flex-start; padding-left: 2px; background: #cfcf9e; font-size: 12.600px; }

/* tabs */
.tabs { height: 43px; flex: none; display: grid; grid-template-columns: 72px 89px 120px 103px 90px 42px 53px 62px 59px 74px 69px 63px 66px 130px; align-items: end; padding-left: 2px; border-bottom: 1px solid #aaa; background: #fff; }
.tab { height: 40px; margin-right: 1px; padding-top: 1px; border: 1px solid #a9a9a9; border-right-width: 2px; background: linear-gradient(#f1f1f1, #e4e4e4); font-size: 10.800px; color: #111; display: flex; align-items: center; justify-content: center; white-space: nowrap; }
.tab-left { justify-content: flex-start; padding-left: 4px; }
.tab.active { height: 43px; margin-bottom: -1px; padding-top: 0; padding-bottom: 5px; border-bottom: 0; background: #fff; position: relative; z-index: 1; }

/* main */
.main { height: 421px; flex: none; display: flex; flex-direction: column; padding-left: 3px; border-left: 1px solid #9a9a9a; overflow: hidden; }
.dieta { height: 78px; flex: none; padding-top: 11px; }
.group { position: relative; height: 67px; display: flex; padding-top: 8px; border-top: 1px solid #dcdcdc; border-left: 1px solid #dcdcdc; }
.legend { position: absolute; left: 7px; top: -6px; padding: 0 4px; background: #fff; font-size: 12.500px; font-weight: 700; line-height: 13px; }
.dieta-grid { width: 1255px; flex: none; }
.dg-head, .dg-row { display: grid; grid-template-columns: 12px 642px 61px; width: 715px; }
.dg-head { height: 20px; background: #3f72ab; color: #e4eaf4; font-size: 12.700px; align-items: center; }
.dg-row { height: 18px; font-size: 12.500px; align-items: center; }
.dg-c1 { padding-left: 2px; padding-top: 1px; }
.dg-row .dg-c1 { padding-left: 3px; }
.dg-c2 { padding-left: 3px; height: 100%; display: flex; align-items: center; border-left: 1px solid #c4c4c4; }
.dg-head .dg-c2 { border-left: 0; }
.dg-ind { height: 100%; background: #3f72ab; display: flex; align-items: center; justify-content: center; }

.vscroll { width: 15px; flex: none; background: #f0f0f0; display: flex; flex-direction: column; align-items: center; padding-top: 6px; }
.vscroll .end { margin-top: auto; margin-bottom: 6px; }
.thumb { display: block; background: #cdcdcd; }
.vs-dieta { height: 57px; }
.th-dieta { width: 15px; height: 17px; margin-top: 3px; }
.suspender { width: 83px; height: 56px; margin-left: 2px; margin-top: 1px; padding-top: 1px; font-size: 12px; font-weight: 700; letter-spacing: .5px; }
.bar { flex: none; height: 18px; display: flex; align-items: center; background: #2c5179; color: #e4eaf4; font-size: 13px; font-weight: 700; }
.sol-head, .sol-row { display: grid; grid-template-columns: 12px 243px 158px 46px 46px 1fr; flex: none; }
.sol-head { height: 20px; padding-top: 1px; background: #3f72ab; color: #e4eaf4; font-size: 13px; font-weight: 700; align-items: center; grid-template-columns: 15px 242px 158px 46px 220px 1fr; }
.sol-end { grid-column: 6; text-align: left; padding-left: 146px; }
.sol-row { height: 18px; }
.sol-row span { border-right: 1px solid #c4c4c4; }
.sol-ind { background: #3f72ab; border-right: 0 !important; display: flex; align-items: center; justify-content: center; }
.sol-head span:first-child { grid-column: 2; }
.sol-space { height: 49px; flex: none; }
.hscroll { height: 14px; flex: none; background: #f0f0f0; display: flex; align-items: center; padding: 0 6px 0 5px; }
.hscroll .end { margin-left: auto; }
.th-h { width: 17px; height: 100%; margin-left: 6px; }
.bar-med { margin-top: 2px; position: relative; }
.ref-ico { margin-left: 4px; }
.add-ico { margin-left: 19px; }
.bar-l { margin-left: 8px; padding-top: 1px; width: 499px; white-space: nowrap; font-size: 12.900px; }
.bar-c { width: 648px; padding-top: 1px; white-space: nowrap; letter-spacing: .12px; }
.bar-r { width: 120px; padding-top: 1px; white-space: nowrap; font-size: 12.200px; }

.lower { display: flex; flex: 1; min-height: 0; }
.lower-left { width: 1210px; flex: none; display: flex; flex-direction: column; }
.med-wrap { height: 126px; flex: none; display: flex; }
.med-grid { width: 1193px; flex: none; }
.mrow { display: grid; grid-template-columns: 12px 22px 47px 70px 235px 159px 47px 118px 95px 150px 66px 172px; height: 18px; font-size: 11.800px; align-items: stretch; }
.mrow > span { display: flex; align-items: center; padding-left: 3px; padding-top: 1px; white-space: pre; min-width: 0; }
.mrow > span:nth-child(n+3) { border-left: 1px solid #b5b5b5; }
.mrow > span:first-child { padding-left: 0; background: #000080; justify-content: center; }
.mrow > .mk { padding: 0; }
.mhead { height: 20px; background: #000080; color: #e6ecf8; font-weight: 700; font-size: 13px; }
.mhead > span:nth-child(n+3) { border-left: 0; }
.mrow.odd { background: #d8e4fb; }
.mrow > .r { justify-content: flex-end; padding-right: 3px; }
.mrow > .selcell { background: #3399ff; color: #fff; }

.vs-med { width: 16px; margin-left: 1px; height: 126px; }
.th-med { width: 16px; height: 51px; margin-top: 30px; }
.hs-med { height: 15px; width: 1193px; }
.outros { margin-top: 1px; width: 1210px; height: 61px; flex: none; display: flex; border: 1px solid #666; padding-right: 1px; }
.ou-grid { width: 1192px; flex: none; }
.ou-head { width: 598px; height: 20px; background: #008000; color: #e8f4e8; font-size: 12px; line-height: 21px; padding-left: 14px; }
.ou-row { display: grid; grid-template-columns: 12px 586px; height: 18px; font-size: 12px; align-items: center; }
.ou-row > span:last-child { padding: 1px 0 0 3px; white-space: nowrap; height: 100%; display: flex; align-items: center; border-right: 1px solid #ccc; }
.ou-ind { height: 100%; background: #008000; display: flex; align-items: center; justify-content: center; }
.vs-ou { width: 16px; height: 59px; padding-top: 5px; }
.th-ou { width: 15px; height: 17px; margin-top: 3px; }

.via { width: 145px; margin-left: 2px; flex: none; position: relative; padding-top: 15px; }
.via::before { content: ""; position: absolute; left: 0; right: 0; top: 7px; border-top: 1px solid #ddd; }
.via-legend { position: absolute; left: 5px; top: 0; padding: 0 1px; background: #fff; font-size: 10.700px; line-height: 14px; white-space: nowrap; }
.via-list { display: flex; flex-direction: column; gap: 2px; }
.via-btn { height: 15px; width: 144px; font-size: 10.800px; }

/* toolbar */
.toolbar { height: 57px; flex: none; display: flex; border-top: 2px solid #adadad; border-bottom: 2px solid #adadad; background: #fff; position: relative; }
.tb-group { display: flex; flex-direction: column; }
.tb-label { display: block; font-size: 11px; line-height: 14px; height: 17px; white-space: nowrap; padding-top: 1px; }
.tb-blue { color: #0a0a90; font-weight: 700; }
.tb-btns { display: flex; gap: 3px; }
.tb-nav { padding-left: 4px; }
.tb-nav .tb-label { padding-left: 2px; }
.tb-nav .tb-btns { gap: 2px; }
.tb-acao { margin-left: 3px; }
.tb-acao .tb-label { padding-left: 1px; }
.tb-conf { margin-left: 3px; }
.tb-conf .tb-label { margin-left: -1px; }
.tb-ic { width: 39px; height: 34px; }
.tb-off { background: #eee; border-color: #ddd; }
.tb-print { margin-left: 1px; border-left: 1px solid #adadad; padding-left: 3px; }
.print-btns { gap: 3px; padding-left: 3px; align-items: flex-start; }
.pb-presc { width: 101px; height: 34px; justify-content: flex-start; padding: 2px 0 0 9px; gap: 4px; font-size: 11.500px; position: relative; }
.pb-presc svg { margin-top: -2px; }
.pb-t { display: block; }
.cb { display: block; position: absolute; width: 14px; height: 14px; border: 1px solid #8a8a8a; background: #fff; }
.cb1 { right: 2px; top: 1px; }
.cb2 { right: 2px; top: 18px; }
.cb3 { right: 0; top: 1px; width: 13px; height: 14px; }
.pb { height: 34px; padding-top: 3px; font-size: 11px; text-align: center; line-height: 14px; position: relative; }
.pb-lg { font-size: 13px; line-height: 16px; letter-spacing: .2px; color: #222; }
.pb-ex { width: 63px; padding-top: 4px; font-size: 13.300px; }
.pb-par { width: 84px; }
.pb-cop { width: 59px; font-size: 10.800px; }
.pb-tra { width: 38px; font-size: 10.700px; }
.pb-apa { width: 46px; }
.pb-ass { width: 61px; }
.pb-sin { width: 71px; height: 36px; }
.pb-fnp { width: 36px; }
.pb-fic { width: 59px; font-size: 10.300px; }
.pat-btns { margin-left: auto; margin-right: -1px; width: 128px; display: flex; flex-direction: column; gap: 2px; padding-top: 3px; }
.pat { height: 15px; width: 128px; font-size: 10.700px; }

.statusbar { height: 20px; flex: none; display: flex; align-items: center; justify-content: space-between; padding: 2px 1px 0 5px; background: #efefef; border-bottom: 1px solid #fff; font-size: 11px; color: #333; }
.st-copy { font-family: "Liberation Serif", serif; font-size: 11.200px; color: #000; }

/* taskbar */
.taskbar { height: 40px; flex: none; display: flex; align-items: center; background: linear-gradient(90deg, #b6852f 0, #bb8d3a 740px, #a8843f 752px, #c5a872 790px, #c5a872 1170px, #bb9036 1225px, #be9338 1366px); color: #fff; }
.start { width: 52px; padding-left: 12px; flex: none; }
.slots { display: grid; grid-template-columns: repeat(11, 62px); height: 40px; flex: none; }
.slot { display: flex; align-items: center; height: 40px; }
.slot > svg, .slot > .doc-ico { margin-left: 14px; }
.frame { width: 58px; height: 38px; display: flex; align-items: center; justify-content: center; border: 1px solid rgba(255,255,255,.25); background: rgba(255,255,255,.14); }
.frame-s { width: 53px; }
.stub { display: block; width: 4px; height: 38px; margin-left: 1px; border: 1px solid rgba(255,255,255,.25); background: rgba(255,255,255,.14); }
.frame-act { border: 1px solid rgba(255,255,255,.85); background: rgba(255,255,255,.3); }
.doc-ico { width: 32px; height: 30px; background: #fff; border: 1px solid #9aa; display: flex; align-items: center; justify-content: center; font-size: 16px; font-weight: 700; }
.word { color: #1b4fa8; border-left: 4px solid #2a5caa; }
.excel { color: #1d7a3a; border-left: 4px solid #2a8a4a; }
.syr-box { display: block; width: 32px; height: 32px; background: #fff; }
.syr-gray { background: #bdbdbd; --barrel: #a020c0; --mark: #e020a0; }
.e-box { display: flex; align-items: center; justify-content: center; width: 32px; height: 32px; background: #f00; }
.e-circle { width: 32px; height: 32px; border-radius: 50%; background: #00e8f0; color: #8a0a20; display: flex; align-items: center; justify-content: center; font: italic 700 30px/28px "Liberation Serif", serif; }
.tray { margin-left: auto; display: flex; align-items: center; padding-right: 11px; }
.tr-ico { margin-left: 11px; }
.clock { width: 80px; margin-left: 16px; text-align: center; font-size: 12px; line-height: 17px; color: #f8f8f8; font-family: "Open Sans", sans-serif; padding-top: 1px; }

/* overlays */
.annot { position: absolute; left: 0; top: 0; pointer-events: none; }
.dialog { position: absolute; left: 495px; top: 298px; width: 376px; height: 132px; padding: 29px 7px 7px; background: #efc66a; border: 1px solid #c8a254; box-shadow: 0 0 3px rgba(0,0,0,.25); }
.dlg-title { position: absolute; left: 0; right: 0; top: 4px; text-align: center; font-family: "Open Sans", sans-serif; font-size: 15px; color: #333; }
.dlg-close { position: absolute; right: 5px; top: 0; width: 32px; height: 20px; background: #c75050; display: flex; align-items: center; justify-content: center; }
.dlg-body { height: 95px; border: 1px solid #c8a254; background: #f0f0f0; display: flex; flex-direction: column; }
.dlg-msg { height: 54px; background: #fff; border-bottom: 1px solid #dfdfdf; display: flex; align-items: center; gap: 10px; padding: 0 0 6px 9px; font-family: "Open Sans", sans-serif; font-size: 11.200px; color: #111; white-space: nowrap; }
.dlg-foot { flex: 1; display: flex; justify-content: flex-end; align-items: flex-start; padding: 8px 10px 0 0; }
.dlg-ok { width: 67px; height: 21px; border: 1px solid #3c7fd0; background: linear-gradient(#f2f2f2, #e5e5e5); display: flex; align-items: center; justify-content: center; font-family: "Open Sans", sans-serif; font-size: 12px; color: #111; }
.watermark { position: absolute; left: 1007px; top: 630px; font-family: "Open Sans", sans-serif; color: rgba(120,120,120,.5); pointer-events: none; white-space: nowrap; }
.wm1 { font-size: 19px; line-height: 26px; }
.wm2 { font-size: 13.500px; line-height: 20px; }
```
